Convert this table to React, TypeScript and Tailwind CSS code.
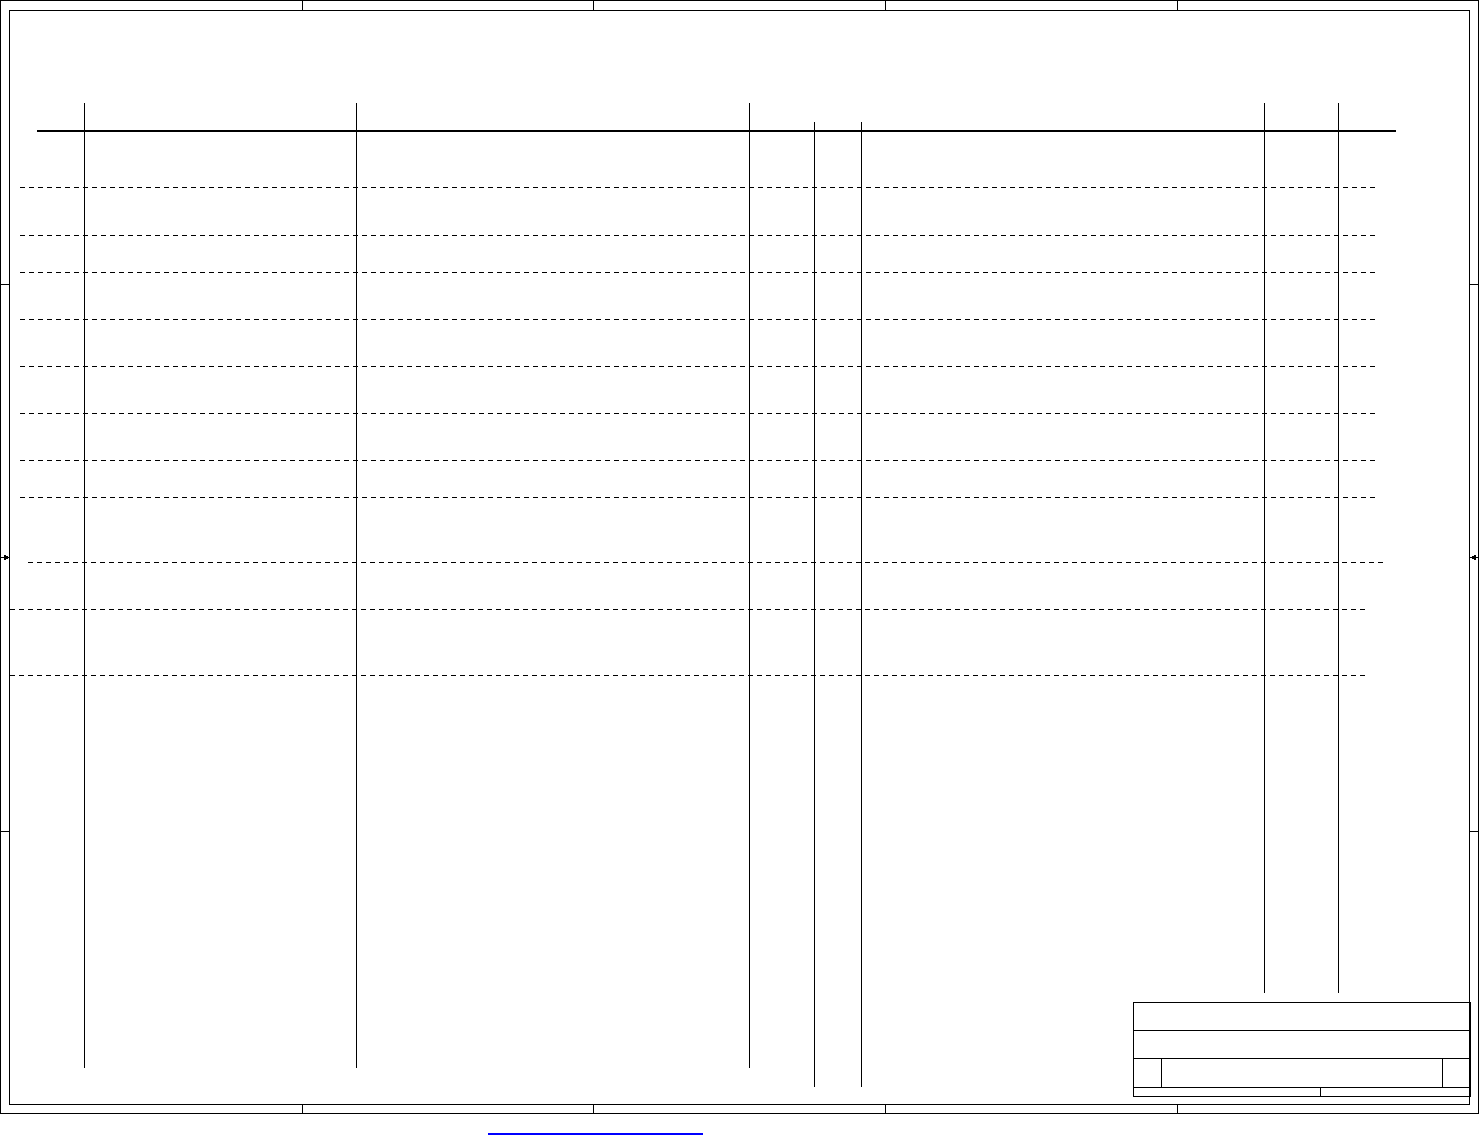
const px = (n: number) => n + 0.5

const dashedRows = [
  { y: 187, x1: 20, x2: 1377 },
  { y: 235, x1: 20, x2: 1377 },
  { y: 272, x1: 20, x2: 1377 },
  { y: 319, x1: 20, x2: 1377 },
  { y: 366, x1: 20, x2: 1377 },
  { y: 413, x1: 20, x2: 1377 },
  { y: 460, x1: 20, x2: 1377 },
  { y: 497, x1: 20, x2: 1377 },
  { y: 562, x1: 28, x2: 1386 },
  { y: 609, x1: 10, x2: 1367 },
  { y: 675, x1: 10, x2: 1367 },
]

const columns = [
  { x: 84, y1: 103, y2: 1068 },
  { x: 356, y1: 103, y2: 1068 },
  { x: 749, y1: 103, y2: 1068 },
  { x: 814, y1: 122, y2: 1087 },
  { x: 861, y1: 122, y2: 1087 },
  { x: 1264, y1: 103, y2: 993 },
  { x: 1338, y1: 103, y2: 993 },
]

const zoneTicksX = [302, 593, 885, 1177]
const zoneTicksY = [284, 831]

const Sheet = () => (
  <svg width={1480} height={1115} viewBox="0 0 1480 1115" className="block" shapeRendering="crispEdges">
    {/* frame */}
    <rect x={0.5} y={0.5} width={1478} height={1113} fill="none" stroke="#000" strokeWidth={1.4} />
    <rect x={9.5} y={10.5} width={1460} height={1094} fill="none" stroke="#000" strokeWidth={1.4} />

    {/* zone ticks */}
    {zoneTicksX.map((x) => (
      <g key={x}>
        <line x1={px(x)} y1={0} x2={px(x)} y2={10} stroke="#000" />
        <line x1={px(x)} y1={1105} x2={px(x)} y2={1114} stroke="#000" />
      </g>
    ))}
    {zoneTicksY.map((y) => (
      <g key={y}>
        <line x1={0} y1={px(y)} x2={10} y2={px(y)} stroke="#000" />
        <line x1={1470} y1={px(y)} x2={1479} y2={px(y)} stroke="#000" />
      </g>
    ))}

    {/* centre arrows */}
    <line x1={0} y1={557.5} x2={6} y2={557.5} stroke="#000" />
    <polygon points="4,554.5 9.5,557.5 4,560.5" fill="#000" />
    <line x1={1474} y1={557.5} x2={1479} y2={557.5} stroke="#000" />
    <polygon points="1476,554.5 1470.5,557.5 1476,560.5" fill="#000" />

    {/* table header rule */}
    <line x1={37} y1={131} x2={1396} y2={131} stroke="#000" strokeWidth={2} />

    {/* columns */}
    {columns.map((c) => (
      <line key={c.x} x1={px(c.x)} y1={c.y1} x2={px(c.x)} y2={c.y2} stroke="#000" />
    ))}

    {/* dashed rows */}
    {dashedRows.map((r) => (
      <line key={r.y} x1={r.x1} y1={px(r.y)} x2={r.x2} y2={px(r.y)} stroke="#000" strokeDasharray="5 4" />
    ))}

    {/* title block */}
    <g stroke="#000" fill="none">
      <rect x={1133.5} y={1002.5} width={337} height={94} strokeWidth={1.2} />
      <line x1={1133} y1={1030.5} x2={1470} y2={1030.5} />
      <line x1={1133} y1={1058.5} x2={1470} y2={1058.5} />
      <line x1={1133} y1={1087.5} x2={1470} y2={1087.5} />
      <line x1={1161.5} y1={1058} x2={1161.5} y2={1087} />
      <line x1={1442.5} y1={1058} x2={1442.5} y2={1087} />
      <line x1={1320.5} y1={1087} x2={1320.5} y2={1096} />
    </g>
  </svg>
)

export default function App() {
  return (
    <div className="w-[1480px] h-[1135px] bg-white overflow-hidden">
      <Sheet />
      <a href="#" className="block ml-[488px] mt-[18px] w-[215px] h-[2px] bg-[#0000ff]" aria-label="link" />
    </div>
  )
}
